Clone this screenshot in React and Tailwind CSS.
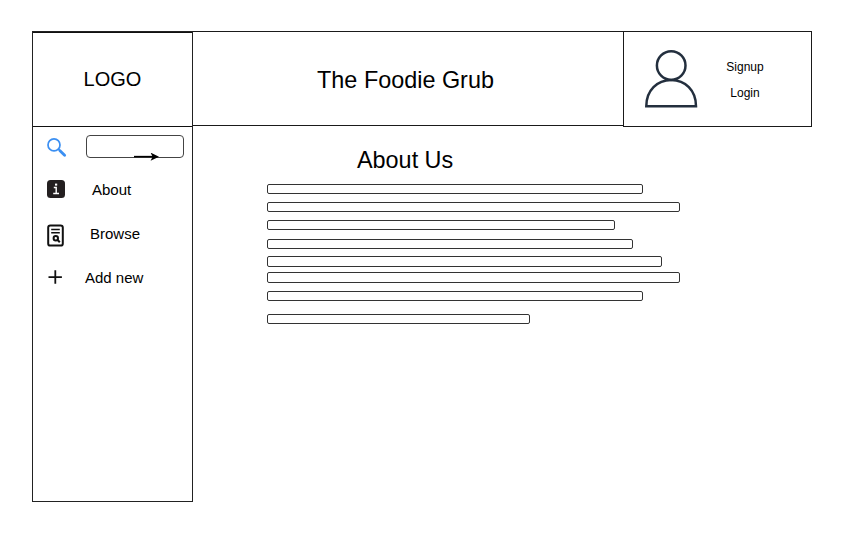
const bars = [
  'mt-[10px] h-2.5 w-[376px]',
  'mt-2 h-2.5 w-[413px]',
  'mt-2 h-2.5 w-[348px]',
  'mt-[9px] h-2.5 w-[366px]',
  'mt-[7px] h-[11px] w-[395px]',
  'mt-[5px] h-[11px] w-[413px]',
  'mt-2 h-2.5 w-[376px]',
  'mt-[13px] h-2.5 w-[263px]',
];

function SearchIcon() {
  return (
    <svg width="20" height="20" viewBox="0 0 20 20" fill="none" stroke="#3b8ff2">
      <circle cx="7" cy="6.9" r="6" strokeWidth="1.7" />
      <path d="M11.2 10.8l2 2" strokeWidth="1.8" />
      <path d="M13 12.8l4.6 4.4" strokeWidth="2.9" strokeLinecap="round" />
    </svg>
  );
}

function InfoIcon() {
  return (
    <svg width="18" height="18" viewBox="0 0 18 18">
      <rect width="18" height="18" rx="3.5" fill="#231f20" />
      <rect x="8" y="3.6" width="2.2" height="2" fill="#fff" />
      <path d="M6.8 7.5h2.4v5.8M6.2 13.5h5.8" fill="none" stroke="#fff" strokeWidth="1.4" />
    </svg>
  );
}

function BrowseIcon() {
  return (
    <svg width="17" height="23" viewBox="0 0 17 23" fill="none" stroke="#111" strokeWidth="2">
      <rect x="1.2" y="1.4" width="14.6" height="20.2" rx="2.2" />
      <path d="M4.2 5.5h8.6M4.2 8.7h8.6" strokeWidth="1.6" />
      <circle cx="8.8" cy="14.2" r="2.2" strokeWidth="2" />
      <path d="M10.4 15.8l2.4 2.5" strokeWidth="2" />
    </svg>
  );
}

function PlusIcon() {
  return (
    <svg width="14" height="14" viewBox="0 0 14 14" stroke="#111" strokeWidth="1.8">
      <path d="M7.3 0.3v13.4M0.5 7.1h13.4" />
    </svg>
  );
}

function UserIcon() {
  return (
    <svg width="54" height="60" viewBox="0 0 54 60" fill="none" stroke="#232f3e" strokeWidth="2.5">
      <circle cx="27.2" cy="16.6" r="14.3" />
      <path d="M2.3 57.2 C2.3 41.4 13.2 31 27.2 31 S52 41.4 52 57.2 Z" />
    </svg>
  );
}

function NavItem({ icon, label, className, labelClass }) {
  return (
    <a className={`flex items-center ${className}`}>
      <span className="flex w-[18px] shrink-0 justify-center">{icon}</span>
      <span className={`whitespace-nowrap ${labelClass}`}>{label}</span>
    </a>
  );
}

export default function App() {
  return (
    <div className="h-[536px] w-[847px] overflow-hidden bg-white pl-8 pt-[31px] font-['Liberation_Sans',Arial,sans-serif] text-black">
      <div className="flex w-[780px] items-start">
        <aside className="h-[471px] w-[161px] shrink-0 border border-[#222]">
          <div className="flex h-[95px] items-center justify-center border-y border-[#111] text-[20px]">
            <span className="mb-[2px] leading-none">LOGO</span>
          </div>
          <nav className="text-[15px] leading-4">
            <div className="flex pl-[14px] pt-2">
              <div className="pt-[3px]">
                <SearchIcon />
              </div>
              <div className="relative ml-[19px] h-[23px] w-[98px] rounded-[4px] border border-[#444]">
                <svg className="absolute left-[47px] top-[17px]" width="26" height="8" viewBox="0 0 26 8">
                  <path d="M0 3.6h19" stroke="#000" strokeWidth="1.5" />
                  <path d="M25 3.7L16.6 -0.4l2 4.1-2 4.1z" fill="#000" />
                </svg>
              </div>
            </div>
            <NavItem icon={<InfoIcon />} label="About" className="mt-[22px] h-[18px] pl-[14px]" labelClass="ml-[27px] mt-[2px]" />
            <NavItem icon={<BrowseIcon />} label="Browse" className="mt-[26px] h-[23px] pl-[13px]" labelClass="ml-[26px] -mt-[3px]" />
            <NavItem icon={<PlusIcon />} label="Add new" className="mt-[23px] h-[14px] pl-[13px]" labelClass="ml-[21px] mt-[2px]" />
          </nav>
        </aside>
        <main className="grow">
          <header className="flex items-start">
            <div className="flex h-[95px] w-[430px] items-center justify-center border-y border-[#1a1a1a]">
              <h1 className="mr-[5px] mt-[5px] text-[23.4px] leading-none">The Foodie Grub</h1>
            </div>
            <div className="flex h-24 grow items-start border border-[#1a1a1a] pl-5 pt-[17px]">
              <UserIcon />
              <div className="ml-[22px] mt-[11px] flex w-[50px] flex-col items-center gap-3 text-[12px] leading-[14px]">
                <a>Signup</a>
                <a>Login</a>
              </div>
            </div>
          </header>
          <section className="pl-[74px] pt-5">
            <h2 className="ml-[90px] text-[23.4px] leading-[27px]">About Us</h2>
            <div>
              {bars.map((bar, i) => (
                <div key={i} className={`rounded-[2px] border border-[#333] ${bar}`} />
              ))}
            </div>
          </section>
        </main>
      </div>
    </div>
  );
}
